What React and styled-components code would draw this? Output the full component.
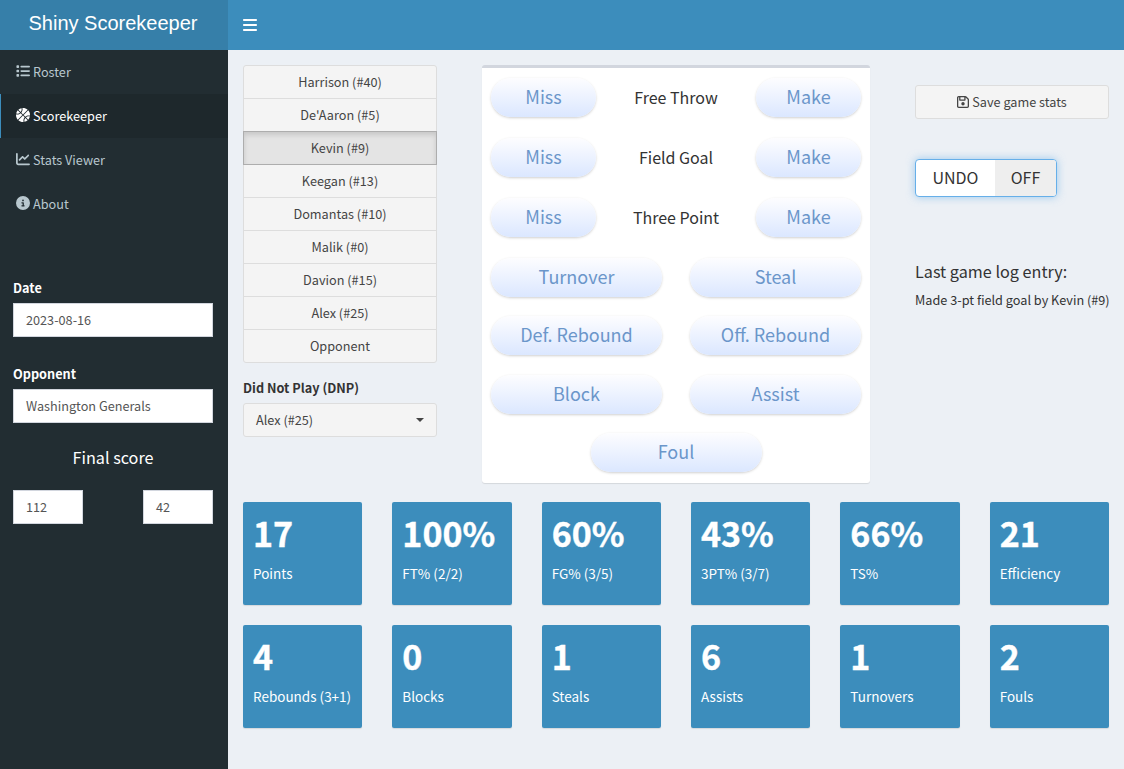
import { createGlobalStyle } from "styled-components";
import styled from "styled-components";
import {
  FaBars,
  FaBasketball,
  FaChartLine,
  FaCircleInfo,
  FaList,
  FaRegFloppyDisk,
} from "react-icons/fa6";

const FONT = `"Noto Sans CJK SC", "Source Sans Pro", "Noto Sans", sans-serif`;

const GlobalStyle = createGlobalStyle`
  html, body {
    margin: 0;
    height: 100%;
    overflow: hidden;
    background: #ecf0f5;
  }
  * {
    box-sizing: border-box;
  }
  body {
    font-family: ${FONT};
    font-size: 12.7px;
    color: #333;
  }
`;

const NAV = [
  { label: "Roster", icon: <FaList /> },
  { label: "Scorekeeper", icon: <FaBasketball />, active: true },
  { label: "Stats Viewer", icon: <FaChartLine /> },
  { label: "About", icon: <FaCircleInfo /> },
];

const PLAYERS = [
  "Harrison (#40)",
  "De'Aaron (#5)",
  "Kevin (#9)",
  "Keegan (#13)",
  "Domantas (#10)",
  "Malik (#0)",
  "Davion (#15)",
  "Alex (#25)",
  "Opponent",
];

const STATS = [
  ["17", "Points"],
  ["100%", "FT% (2/2)"],
  ["60%", "FG% (3/5)"],
  ["43%", "3PT% (3/7)"],
  ["66%", "TS%"],
  ["21", "Efficiency"],
  ["4", "Rebounds (3+1)"],
  ["0", "Blocks"],
  ["1", "Steals"],
  ["6", "Assists"],
  ["1", "Turnovers"],
  ["2", "Fouls"],
];

function App() {
  return (
    <Page>
      <GlobalStyle />
      <Logo>Shiny Scorekeeper</Logo>
      <TopBar>
        <FaBars />
      </TopBar>
      <Sidebar>
        <Nav>
          {NAV.map((item) => (
            <NavItem key={item.label} $active={item.active}>
              {item.icon}
              <span>{item.label}</span>
            </NavItem>
          ))}
        </Nav>
        <SideForm>
          <SideLabel>Date</SideLabel>
          <SideInput>2023-08-16</SideInput>
          <SideLabel $top={27}>Opponent</SideLabel>
          <SideInput>Washington Generals</SideInput>
          <ScoreTitle>Final score</ScoreTitle>
          <ScoreRow>
            <SideInput>112</SideInput>
            <SideInput>42</SideInput>
          </ScoreRow>
        </SideForm>
      </Sidebar>
      <Content>
        <TopRow>
          <div>
            <PlayerGroup>
              {PLAYERS.map((name) => (
                <PlayerButton key={name} $active={name === "Kevin (#9)"}>
                  {name}
                </PlayerButton>
              ))}
            </PlayerGroup>
            <DnpLabel>Did Not Play (DNP)</DnpLabel>
            <DnpSelect>
              Alex (#25)
              <Caret />
            </DnpSelect>
          </div>
          <ActionPanel>
            <ShotRow>
              <Pill>Miss</Pill>
              <ShotName>Free Throw</ShotName>
              <Pill>Make</Pill>
            </ShotRow>
            <ShotRow>
              <Pill>Miss</Pill>
              <ShotName>Field Goal</ShotName>
              <Pill>Make</Pill>
            </ShotRow>
            <ShotRow>
              <Pill>Miss</Pill>
              <ShotName>Three Point</ShotName>
              <Pill>Make</Pill>
            </ShotRow>
            <PairRow>
              <Pill>Turnover</Pill>
              <Pill>Steal</Pill>
            </PairRow>
            <PairRow $gap={20}>
              <Pill>Def. Rebound</Pill>
              <Pill>Off. Rebound</Pill>
            </PairRow>
            <PairRow $gap={19}>
              <Pill>Block</Pill>
              <Pill>Assist</Pill>
            </PairRow>
            <FoulRow>
              <Pill>Foul</Pill>
            </FoulRow>
          </ActionPanel>
          <RightColumn>
            <SaveButton>
              <FaRegFloppyDisk />
              Save game stats
            </SaveButton>
            <UndoToggle>
              <UndoSide>UNDO</UndoSide>
              <OffSide>OFF</OffSide>
            </UndoToggle>
            <LogTitle>Last game log entry:</LogTitle>
            <LogText>Made 3-pt field goal by Kevin (#9)</LogText>
          </RightColumn>
        </TopRow>
        <StatGrid>
          {STATS.map(([value, label]) => (
            <StatBox key={label}>
              <StatValue>{value}</StatValue>
              <StatLabel>{label}</StatLabel>
            </StatBox>
          ))}
        </StatGrid>
      </Content>
    </Page>
  );
}

export default App;

const Page = styled.div`
  display: grid;
  grid-template-columns: 228px 1fr;
  grid-template-rows: 50px 1fr;
  height: 769px;
`;
const Logo = styled.div`
  background: #367fa9;
  color: #fff;
  font-family: "Liberation Sans", Arial, sans-serif;
  font-size: 20px;
  line-height: 47px;
  text-align: center;
  padding-right: 2px;
`;
const TopBar = styled.div`
  background: #3c8dbc;
  color: #fff;
  display: flex;
  align-items: center;
  padding-left: 15px;
  svg {
    width: 14px;
    height: 16px;
  }
`;
const Sidebar = styled.div`
  background: #222d32;
`;
const Nav = styled.div`
  display: flex;
  flex-direction: column;
`;
const NavItem = styled.div`
  display: flex;
  align-items: center;
  gap: 3px;
  height: 44px;
  padding-bottom: 2px;
  padding-left: ${(p) => (p.$active ? "15px" : "16px")};
  border-left: ${(p) => (p.$active ? "1px solid #3c8dbc" : "none")};
  background: ${(p) => (p.$active ? "#1e282c" : "transparent")};
  color: ${(p) => (p.$active ? "#fff" : "#b8c7ce")};
  svg {
    width: 14px;
    height: 14px;
  }
`;
const SideForm = styled.div`
  padding: 52px 15px 0 13px;
  width: 228px;
`;
const SideLabel = styled.div`
  color: #fff;
  font-weight: 700;
  line-height: 20px;
  margin: ${(p) => p.$top || 0}px 0 5px;
`;
const SideInput = styled.div`
  height: 34px;
  background: #fff;
  border: 1px solid #d2d6de;
  color: #555;
  line-height: 32px;
  padding: 0 12px;
  width: 100%;
`;
const ScoreTitle = styled.div`
  color: #fff;
  font-size: 16.2px;
  line-height: 20px;
  text-align: center;
  margin: 24px 0 23px;
`;
const ScoreRow = styled.div`
  display: grid;
  grid-template-columns: 70px 70px;
  justify-content: space-between;
`;
const Content = styled.div`
  padding: 15px 15px 0;
`;
const TopRow = styled.div`
  display: grid;
  grid-template-columns: 194px 388px 194px;
  justify-content: space-between;
  height: 437px;
  align-items: start;
`;
const PlayerGroup = styled.div`
  display: flex;
  flex-direction: column;
`;
const PlayerButton = styled.div`
  height: 34px;
  margin-top: -1px;
  background: ${(p) => (p.$active ? "#e4e4e4" : "#f4f4f4")};
  border: 1px solid ${(p) => (p.$active ? "#adadad" : "#ddd")};
  box-shadow: ${(p) => (p.$active ? "inset 0 3px 5px rgba(0,0,0,.125)" : "none")};
  position: ${(p) => (p.$active ? "relative" : "static")};
  color: #444;
  line-height: 32px;
  text-align: center;
  &:first-child {
    margin-top: 0;
    border-radius: 3px 3px 0 0;
  }
  &:last-child {
    border-radius: 0 0 3px 3px;
  }
`;
const DnpLabel = styled.div`
  font-weight: 700;
  line-height: 20px;
  margin: 15px 0 5px;
`;
const DnpSelect = styled.div`
  display: flex;
  align-items: center;
  justify-content: space-between;
  height: 34px;
  padding: 0 12px 1px;
  background: #f4f4f4;
  border: 1px solid #ddd;
  border-radius: 3px;
  color: #444;
`;
const Caret = styled.span`
  width: 0;
  height: 0;
  border-top: 4px solid #444;
  border-left: 4px solid transparent;
  border-right: 4px solid transparent;
`;
const ActionPanel = styled.div`
  height: 418px;
  background: #fff;
  border-top: 3px solid #d2d6de;
  border-radius: 3px;
  box-shadow: 0 1px 1px rgba(0, 0, 0, 0.1);
  padding: 10px 9px 0;
`;
const Pill = styled.div`
  height: 39px;
  border-radius: 20px;
  background: linear-gradient(180deg, #fdfdff 0%, #dbe7ff 100%);
  box-shadow: 0 1px 3px -0.5px rgba(0, 0, 0, 0.25);
  color: #6b96ca;
  font-size: 18px;
  line-height: 37px;
  text-align: center;
`;
const ShotRow = styled.div`
  display: grid;
  grid-template-columns: 105px 1fr 105px;
  align-items: center;
  margin-bottom: 21px;
`;
const ShotName = styled.div`
  font-size: 16px;
  color: #333;
  text-align: center;
  padding-bottom: 2px;
`;
const PairRow = styled.div`
  display: grid;
  grid-template-columns: 171px 171px;
  justify-content: space-between;
  margin-bottom: ${(p) => p.$gap || 19}px;
`;
const FoulRow = styled.div`
  display: grid;
  grid-template-columns: 171px;
  justify-content: center;
`;
const RightColumn = styled.div`
  display: flex;
  flex-direction: column;
  align-items: flex-start;
  padding-top: 20px;
`;
const SaveButton = styled.div`
  display: flex;
  align-items: center;
  justify-content: center;
  gap: 3px;
  width: 100%;
  height: 34px;
  padding-bottom: 1px;
  background: #f4f4f4;
  border: 1px solid #ddd;
  border-radius: 3px;
  color: #444;
  svg {
    width: 12px;
    height: 14px;
  }
`;
const UndoToggle = styled.div`
  display: flex;
  margin-top: 40px;
  width: 142px;
  height: 38px;
  background: #fff;
  border: 1px solid #66afe9;
  border-radius: 4px;
  box-shadow: 0 0 8px rgba(102, 175, 233, 0.6);
  overflow: hidden;
  font-size: 16px;
  line-height: 35px;
  text-align: center;
  color: #333;
`;
const UndoSide = styled.div`
  width: 79px;
`;
const OffSide = styled.div`
  flex: 1;
  background: #eee;
`;
const LogTitle = styled.div`
  margin-top: 62px;
  font-size: 16.2px;
  line-height: 24px;
`;
const LogText = styled.div`
  margin-top: 7px;
  line-height: 20px;
  white-space: nowrap;
`;
const StatGrid = styled.div`
  display: grid;
  grid-template-columns: repeat(6, minmax(0, 1fr));
  column-gap: 30px;
  row-gap: 20px;
`;
const StatBox = styled.div`
  height: 103px;
  padding: 10px;
  background: #3c8dbc;
  border-radius: 2px;
  box-shadow: 0 1px 1px rgba(0, 0, 0, 0.1);
  color: #fff;
`;
const StatValue = styled.div`
  font-size: 34px;
  font-weight: 700;
  line-height: 41px;
  -webkit-text-stroke: 0.4px #fff;
`;
const StatLabel = styled.div`
  margin-top: 10px;
  font-size: 13.5px;
  line-height: 21px;
`;
